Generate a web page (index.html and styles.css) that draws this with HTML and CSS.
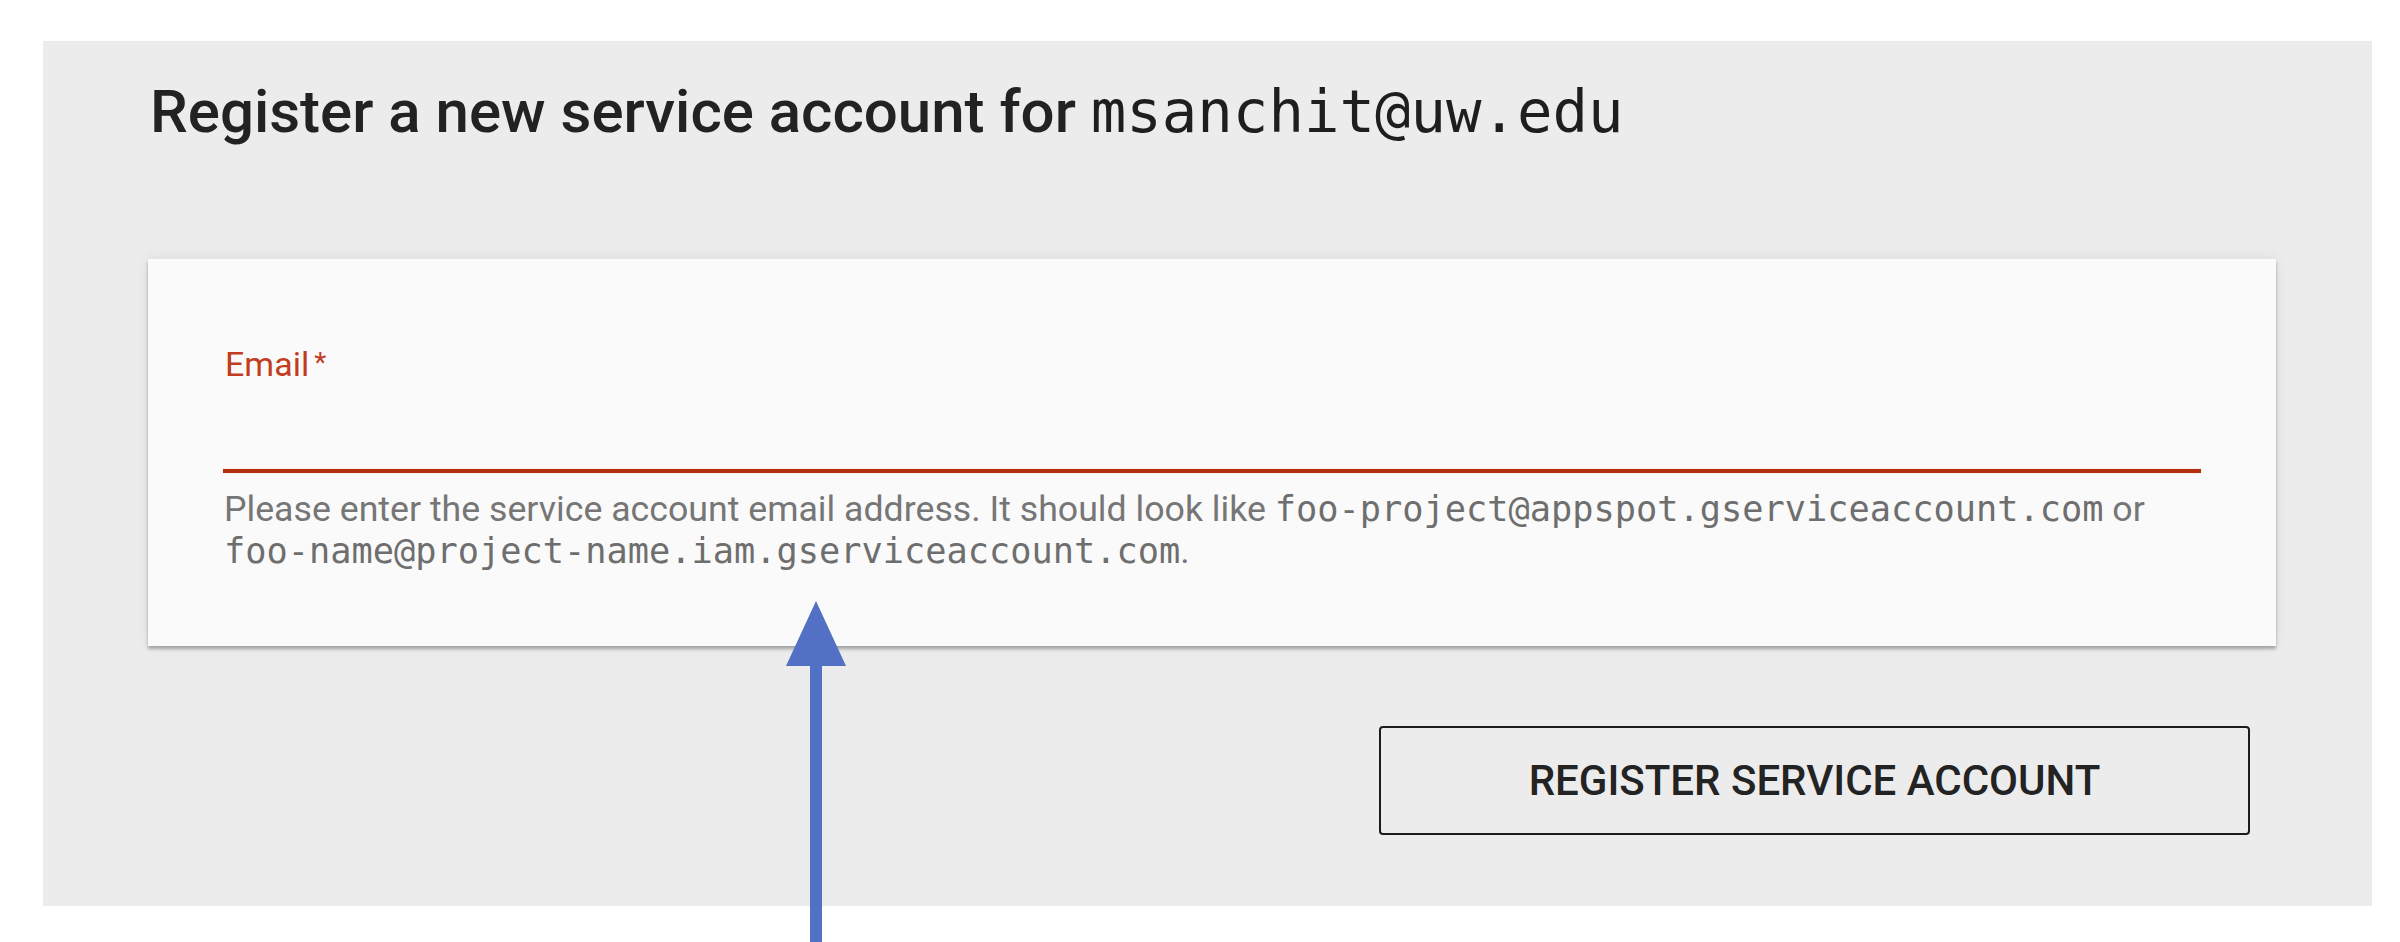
FILE: index.html
```html
<!DOCTYPE html>
<html lang="en">
<head>
<meta charset="utf-8">
<title>Register service account</title>
<link rel="stylesheet" href="styles.css">
</head>
<body>
<main class="panel">
  <h1 class="title">Register a new service account for <code class="title-mono">msanchit@uw.edu</code></h1>
  <section class="card">
    <label class="field-label" for="email">Email<span class="req">*</span></label>
    <input class="field-input" id="email" type="text">
    <div class="field-line"></div>
    <p class="hint">Please enter the service account email address. It should look like <code class="mono">foo-project@appspot.gserviceaccount.com</code> or <code class="mono">foo-name@project-name.iam.gserviceaccount.com</code>.</p>
  </section>
  <div class="actions">
    <button class="btn" type="button">REGISTER SERVICE ACCOUNT</button>
  </div>
</main>
<svg class="arrow" width="80" height="342" viewBox="0 0 80 342" aria-hidden="true">
  <polygon points="40,0 10,65 70,65" fill="#5270c4"/>
  <rect x="34" y="60" width="12" height="282" fill="#5270c4"/>
</svg>
</body>
</html>
```

FILE: styles.css
```css
html, body {
  margin: 0;
  padding: 0;
  background: #ffffff;
}

body {
  font-family: Roboto, "Noto Sans", "Liberation Sans", sans-serif;
  position: relative;
  height: 942px;
  overflow: hidden;
}

.panel {
  margin: 41px 28px 0 43px;
  height: 865px;
  box-sizing: border-box;
  background: #ececec;
  padding: 35px 96px 0 105px;
  display: flex;
  flex-direction: column;
}

.title {
  margin: 0 0 112px 2px;
  font-size: 60px;
  line-height: 71px;
  font-weight: 500;
  color: #222222;
  white-space: nowrap;
}

.title-mono {
  font-family: "DejaVu Sans Mono", "Liberation Mono", monospace;
  font-size: 59px;
  font-weight: 400;
  color: #1e1e1e;
}

.card {
  background: #fafafa;
  box-shadow: 0 3px 3px rgba(0, 0, 0, 0.28), 0 0 14px rgba(0, 0, 0, 0.08);
  padding: 84px 75px 74px 75px;
  display: flex;
  flex-direction: column;
}

.field-label {
  font-size: 34px;
  line-height: 40px;
  color: #c23d1f;
  margin-left: 2px;
}

.req {
  margin-left: 5px;
  font-size: 28px;
  vertical-align: 4px;
}

.field-input {
  border: 0;
  outline: none;
  background: transparent;
  height: 85px;
  padding: 0;
  margin: 0;
}

.field-line {
  height: 4px;
  background: #b32f0e;
  box-shadow: 0 0 1px rgba(200, 60, 30, 0.5);
}

.hint {
  margin: 15px 0 0 1px;
  font-size: 35.7px;
  line-height: 42px;
  color: #767676;
}

.mono {
  font-family: "DejaVu Sans Mono", "Liberation Mono", monospace;
  font-size: 35.3px;
  color: #6e6e6e;
}

.actions {
  display: flex;
  justify-content: flex-end;
  margin-top: 80px;
  padding-right: 26px;
}

.btn {
  width: 871px;
  height: 109px;
  box-sizing: border-box;
  border: 2.5px solid #1c1c1c;
  border-radius: 4px;
  background: transparent;
  font-family: Roboto, "Liberation Sans", sans-serif;
  font-size: 42px;
  font-weight: 500;
  color: #232323;
  letter-spacing: 0;
}

.arrow {
  position: absolute;
  left: 776px;
  top: 601px;
}
```
